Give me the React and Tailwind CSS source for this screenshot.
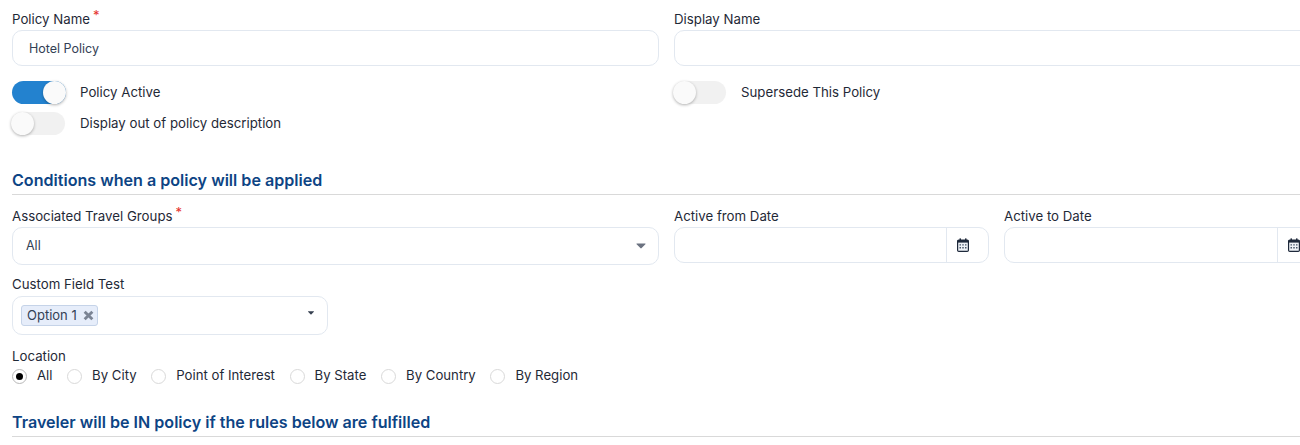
import React from 'react';

const Required = () => <span className="relative -top-[4px] ml-[3px] text-[13px] leading-none text-[#e5322d]">*</span>;

const Label = ({ children, required }) => (
  <div className="flex h-[16px] items-center text-[13.25px] leading-[16px] text-[#1f2937]">
    {children}
    {required && <Required />}
  </div>
);

const Toggle = ({ on, className }) => (
  <div className={`relative h-[23px] rounded-full ${on ? 'bg-[#2382cf]' : 'bg-[#f1f1f1]'} ${className}`}>
    <div className={`absolute top-0 h-[23px] w-[23px] rounded-full bg-[#fafafa] shadow-[0_1px_3px_rgba(0,0,0,0.3)] ${on ? 'right-0' : 'left-0'}`} />
  </div>
);

const ToggleRow = ({ on, label, toggleClass, gap }) => (
  <div className={`flex h-[23px] items-center ${gap}`}>
    <Toggle on={on} className={toggleClass} />
    <span className="text-[13.25px] text-[#1f2937]">{label}</span>
  </div>
);

const Caret = ({ className }) => (
  <svg viewBox="0 0 10 6" className={className}>
    <path d="M1 0.5h8c.5 0 .7.5.4.8L5.4 5.3c-.2.2-.6.2-.8 0L.6 1.3C.3 1 .5.5 1 .5z" fill="currentColor" />
  </svg>
);

const CalendarIcon = () => (
  <svg viewBox="0 0 12 14" className="h-[14px] w-[12px]">
    <rect x="0.6" y="2" width="10.8" height="11.4" rx="1.2" fill="#eef2f7" stroke="#1e293b" strokeWidth="1.2" />
    <rect x="0.6" y="2" width="10.8" height="2.6" fill="#1e293b" />
    <rect x="2.5" y="0.4" width="1.5" height="2.6" fill="#1e293b" />
    <rect x="8" y="0.4" width="1.5" height="2.6" fill="#1e293b" />
    <path d="M2.5 6.2h1.5v1.4H2.5zM5.25 6.2h1.5v1.4h-1.5zM8 6.2h1.5v1.4H8zM2.5 9h1.5v1.4H2.5zM5.25 9h1.5v1.4h-1.5zM8 9h1.5v1.4H8z" fill="#475569" />
  </svg>
);

const RemoveIcon = () => (
  <svg viewBox="0 0 10 10" className="h-[11px] w-[11px] text-[#7b8494]">
    <path d="M1.5 1.5l7 7M8.5 1.5l-7 7" stroke="currentColor" strokeWidth="2.6" />
  </svg>
);

const DateField = ({ label }) => (
  <div>
    <Label>{label}</Label>
    <div className="mt-[3px] flex h-[36px] rounded-[10px] border border-[#e2e8f0]">
      <div className="flex-1" />
      <div className="flex w-[42px] items-center border-l border-[#e2e8f0] pl-[10px]">
        <CalendarIcon />
      </div>
    </div>
  </div>
);

const SectionTitle = ({ children }) => (
  <div className="flex h-[24px] w-[1288px] items-start border-b border-[#d9d9d9] text-[16.1px] font-semibold leading-[18px] text-[#0d4484]">
    {children}
  </div>
);

const Radio = ({ checked, label }) => (
  <label className="flex items-center gap-[10px] text-[13.2px] text-[#1f2937]">
    <span className={`flex h-[15px] w-[15px] items-center justify-center rounded-full border ${checked ? 'border-[#b8b8b8]' : 'border-[#d9d9d9]'}`}>
      {checked && <span className="h-[7px] w-[7px] rounded-full bg-black" />}
    </span>
    {label}
  </label>
);

const App = () => {
  const locations = ['By City', 'Point of Interest', 'By State', 'By Country', 'By Region'];

  return (
    <div className="h-[445px] w-[1300px] overflow-hidden bg-white pl-3 pt-[11px] font-['Inter',sans-serif]">
      {/* Policy details */}
      <div className="grid w-[1309px] grid-cols-[647px_647px] gap-x-[15px]">
        <div>
          <Label required>Policy Name</Label>
          <div className="mt-[3px] flex h-[36px] items-center rounded-[10px] border border-[#e2e8f0] pl-4 pt-[2px] text-[12.5px] text-[#334155]">
            Hotel Policy
          </div>
        </div>
        <div>
          <Label>Display Name</Label>
          <div className="mt-[3px] h-[36px] rounded-[10px] border border-[#e2e8f0]" />
        </div>
      </div>

      <div className="mt-[15px] grid w-[1309px] grid-cols-[647px_647px] gap-x-[15px]">
        <div className="flex flex-col gap-[8px]">
          <ToggleRow on label="Policy Active" toggleClass="w-[54px]" gap="gap-[14px]" />
          <ToggleRow label="Display out of policy description" toggleClass="-ml-px w-[54px]" gap="gap-[15px]" />
        </div>
        <ToggleRow label="Supersede This Policy" toggleClass="-ml-px w-[53px]" gap="gap-[15px]" />
      </div>

      {/* Conditions */}
      <div className="mt-[36px]">
        <SectionTitle>Conditions when a policy will be applied</SectionTitle>
      </div>

      <div className="mt-[13px] grid w-[1309px] grid-cols-[647px_647px] gap-x-[15px]">
        <div>
          <Label required>Associated Travel Groups</Label>
          <div className="mt-[3px] flex h-[38px] items-center justify-between rounded-[10px] border border-[#e2e8f0] pl-[13px] pr-[12px] text-[12.5px] text-[#334155]">
            All
            <Caret className="h-[6px] w-[10px] text-[#6b7280]" />
          </div>
        </div>
        <div className="grid grid-cols-[315px_316px] gap-x-[15px]">
          <DateField label="Active from Date" />
          <DateField label="Active to Date" />
        </div>
      </div>

      <div className="mt-[11px]">
        <Label>Custom Field Test</Label>
        <div className="mt-[4px] flex h-[39px] w-[316px] items-center justify-between rounded-[10px] border border-[#e2e8f0] pl-[8px] pr-[12px]">
          <div className="flex h-[21px] items-center gap-[6px] rounded-[3px] border border-[#c5d3e8] bg-[#e6edfa] pl-[5px] pr-[3px] text-[13px] text-[#334155]">
            Option 1
            <RemoveIcon />
          </div>
          <Caret className="mb-[6px] h-[4px] w-[8px] text-[#374151]" />
        </div>
      </div>

      {/* Location */}
      <div className="mt-[13px]">
        <Label>Location</Label>
        <div className="mt-[4px] flex h-[16px] items-center gap-[14.6px]">
          <Radio checked label="All" />
          {locations.map((loc) => (
            <Radio key={loc} label={loc} />
          ))}
        </div>
      </div>

      <div className="mt-[29px]">
        <SectionTitle>Traveler will be IN policy if the rules below are fulfilled</SectionTitle>
      </div>
    </div>
  );
};

export default App;
